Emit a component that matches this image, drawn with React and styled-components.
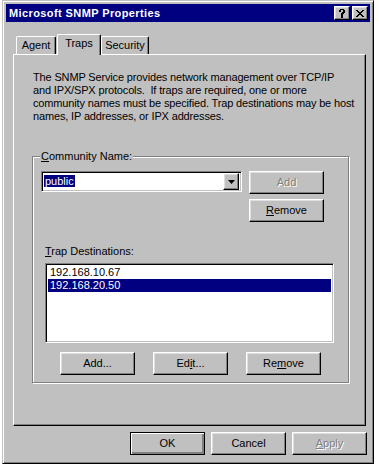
import React from "react";
import styled, { createGlobalStyle, css } from "styled-components";

const Global = createGlobalStyle`
  html, body { margin: 0; padding: 0; background: #ffffff; }
  body {
    font-family: "Liberation Sans", Arial, sans-serif;
    font-size: 11px;
    line-height: 13px;
    color: #000;
  }
  * { box-sizing: border-box; }
`;

const Window = styled.div`
  margin: 0 0 0 2px;
  width: 372px;
  height: 464px;
  background: #c0c0c0;
  border-top: 1px solid #c0c0c0;
  border-left: 1px solid #c0c0c0;
  border-right: 1px solid #000;
  border-bottom: 1px solid #000;
  box-shadow: inset 1px 1px #fff, inset -1px -1px #808080;
  padding: 3px;
  display: flex;
  flex-direction: column;
`;

const TitleBar = styled.div`
  height: 18px;
  background: #000080;
  color: #fff;
  font-weight: bold;
  letter-spacing: 0.4px;
  display: flex;
  align-items: center;
  justify-content: space-between;
  padding: 0 2px 0 3px;
`;

const TitleButtons = styled.div`
  display: flex;
  gap: 2px;
`;

const raised = css`
  background: #c0c0c0;
  border-top: 1px solid #fff;
  border-left: 1px solid #fff;
  border-right: 1px solid #000;
  border-bottom: 1px solid #000;
  box-shadow: inset -1px -1px #808080, inset 1px 1px #dfdfdf;
`;

const TitleButton = styled.div`
  ${raised}
  width: 16px;
  height: 14px;
  display: flex;
  align-items: center;
  justify-content: center;
  color: #000;
`;

const TabRow = styled.div`
  display: flex;
  align-items: flex-end;
  padding-left: 10px;
  margin-top: 11px;
  height: 21px;
  position: relative;
  z-index: 1;
`;

const Tab = styled.div`
  background: #c0c0c0;
  border-top: 1px solid #fff;
  border-left: 1px solid #fff;
  border-right: 1px solid #000;
  border-radius: 2px 2px 0 0;
  box-shadow: inset -1px 0 #808080;
  padding: 2px 0 0 0;
  text-align: center;
  width: ${(p) => p.$w}px;
  height: 18px;
  ${(p) =>
    p.$active &&
    css`
      height: 21px;
      margin: 0 0 -1px 1px;
      position: relative;
      z-index: 2;
    `}
`;

const Panel = styled.div`
  margin: 0 4px 0 7px;
  height: 372px;
  border-top: 1px solid #fff;
  border-left: 1px solid #fff;
  border-right: 1px solid #000;
  border-bottom: 1px solid #000;
  box-shadow: inset -1px -1px #808080;
  padding: 16px 16px 0 18px;
`;

const Para = styled.p`
  margin: 0 0 0 1px;
  white-space: nowrap;
  letter-spacing: -0.15px;
`;

const Group = styled.fieldset`
  margin: 27px 0 0 0;
  padding: 0 8px 7px 8px;
  border: 1px solid #808080;
  box-shadow: inset 1px 1px #fff, 1px 1px #fff;
  width: 317px;
`;

const Legend = styled.legend`
  padding: 0 1px;
  margin-left: -1px;
  background: #c0c0c0;
`;

const TopRow = styled.div`
  display: flex;
  gap: 7px;
  margin-top: 8px;
`;

const sunken = css`
  background: #fff;
  border-top: 1px solid #808080;
  border-left: 1px solid #808080;
  border-right: 1px solid #fff;
  border-bottom: 1px solid #fff;
  box-shadow: inset 1px 1px #000, inset -1px -1px #c0c0c0;
`;

const Combo = styled.div`
  ${sunken}
  width: 201px;
  height: 21px;
  display: flex;
  align-items: center;
  padding: 2px;
`;

const ComboText = styled.div`
  flex: 1;
  padding-left: 0;
`;

const Selected = styled.span`
  background: #000080;
  color: #fff;
  padding: 0 1px;
`;

const DropButton = styled.div`
  ${raised}
  width: 16px;
  height: 17px;
  display: flex;
  align-items: center;
  justify-content: center;
`;

const ButtonColumn = styled.div`
  display: flex;
  flex-direction: column;
  gap: 5px;
`;

const Button = styled.div`
  ${raised}
  width: 75px;
  height: 23px;
  display: flex;
  align-items: center;
  justify-content: center;
  ${(p) =>
    p.$disabled &&
    css`
      color: #808080;
      text-shadow: 1px 1px #fff;
    `}
  ${(p) =>
    p.$default &&
    css`
      border: 1px solid #000;
      box-shadow: inset 1px 1px #fff, inset -1px -1px #808080,
        inset -2px -2px #808080;
    `}
`;

const Label = styled.div`
  margin: 23px 0 0 4px;
`;

const ListBox = styled.div`
  ${sunken}
  margin: 5px 0 0 4px;
  width: 289px;
  height: 80px;
  padding: 2px;
`;

const ListItem = styled.div`
  height: 13px;
  padding-left: 2px;
  ${(p) =>
    p.$selected &&
    css`
      background: #000080;
      color: #fff;
    `}
`;

const ButtonRow = styled.div`
  display: flex;
  gap: 18px;
  margin: 9px 0 0 19px;
`;

const Footer = styled.div`
  display: flex;
  justify-content: flex-end;
  gap: 6px;
  margin: 6px 3px 0 0;
`;

const U = styled.span`
  text-decoration: underline;
`;

export default function App() {
  return (
    <>
      <Global />
      <Window>
        <TitleBar>
          <span>Microsoft SNMP Properties</span>
          <TitleButtons>
            <TitleButton>
              <svg width="8" height="9" viewBox="0 0 8 9">
                <path
                  d="M1 1h1V0h4v1h1v3H6v1H5v2H3V4h1V3h1V1H3v2H1z M3 7h2v2H3z"
                  fill="#000"
                />
              </svg>
            </TitleButton>
            <TitleButton>
              <svg width="8" height="7" viewBox="0 0 8 7">
                <path
                  d="M0 0h2v1h1v1h2V1h1V0h2v1H7v1H6v1H5v1h1v1h1v1h1v1H6V6H5V5H3v1H2v1H0V6h1V5h1V4h1V3H2V2H1V1H0z"
                  fill="#000"
                />
              </svg>
            </TitleButton>
          </TitleButtons>
        </TitleBar>
        <TabRow>
          <Tab $w={40}>Agent</Tab>
          <Tab $w={44} $active>
            Traps
          </Tab>
          <Tab $w={48}>Security</Tab>
        </TabRow>
        <Panel>
          <Para>
            The SNMP Service provides network management over TCP/IP
            <br />
            and IPX/SPX protocols.&nbsp; If traps are required, one or more
            <br />
            community names must be specified. Trap destinations may be host
            <br />
            names, IP addresses, or IPX addresses.
          </Para>
          <Group>
            <Legend>
              <U>C</U>ommunity Name:
            </Legend>
            <TopRow>
              <Combo>
                <ComboText>
                  <Selected>public</Selected>
                </ComboText>
                <DropButton>
                  <svg width="7" height="4" viewBox="0 0 7 4">
                    <path d="M0 0h7L3.5 4z" fill="#000" />
                  </svg>
                </DropButton>
              </Combo>
              <ButtonColumn>
                <Button $disabled>Add</Button>
                <Button>
                  <span>
                    <U>R</U>emove
                  </span>
                </Button>
              </ButtonColumn>
            </TopRow>
            <Label>
              <U>T</U>rap Destinations:
            </Label>
            <ListBox>
              <ListItem>192.168.10.67</ListItem>
              <ListItem $selected>192.168.20.50</ListItem>
            </ListBox>
            <ButtonRow>
              <Button>Add...</Button>
              <Button>
                <span>
                  Ed<U>i</U>t...
                </span>
              </Button>
              <Button>
                <span>
                  Re<U>m</U>ove
                </span>
              </Button>
            </ButtonRow>
          </Group>
        </Panel>
        <Footer>
          <Button $default>OK</Button>
          <Button>Cancel</Button>
          <Button $disabled>
            <span>
              <U>A</U>pply
            </span>
          </Button>
        </Footer>
      </Window>
    </>
  );
}
